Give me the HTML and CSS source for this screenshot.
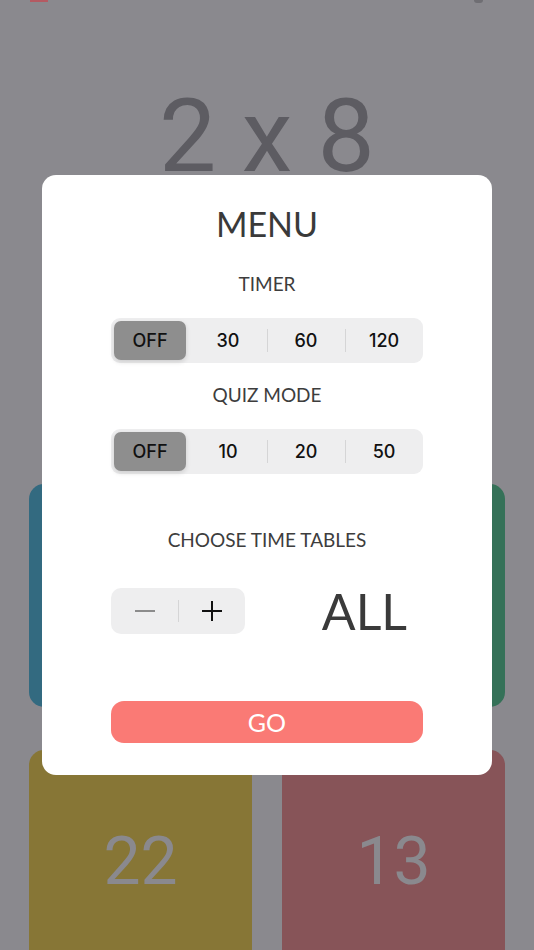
FILE: index.html
```html
<!DOCTYPE html>
<html>
<head>
<meta charset="utf-8">
<link rel="stylesheet" href="styles.css">
</head>
<body>
<div class="app">
  <div class="statusbar">
    <span class="sb-red"></span>
    <span class="sb-dot"></span>
  </div>
  <div class="question">2 x 8</div>
  <div class="tiles">
    <div class="tile blue"></div>
    <div class="tile green"></div>
    <div class="tile olive"><span>22</span></div>
    <div class="tile red"><span>13</span></div>
  </div>
</div>

<div class="overlay">
  <div class="modal">
    <div class="title">MENU</div>
    <div class="label label-timer">TIMER</div>
    <div class="seg seg-timer">
      <div class="opt on">OFF</div>
      <div class="opt">30</div>
      <div class="opt div">60</div>
      <div class="opt div">120</div>
    </div>
    <div class="label label-quiz">QUIZ MODE</div>
    <div class="seg seg-quiz">
      <div class="opt on">OFF</div>
      <div class="opt">10</div>
      <div class="opt div">20</div>
      <div class="opt div">50</div>
    </div>
    <div class="label label-tables">CHOOSE TIME TABLES</div>
    <div class="stepper-row">
      <div class="stepper">
        <div class="step minus">
          <svg width="22" height="22" viewBox="0 0 22 22"><line x1="1" y1="11" x2="21" y2="11" stroke="#8c8c8c" stroke-width="2"/></svg>
        </div>
        <div class="step plus">
          <svg width="22" height="22" viewBox="0 0 22 22"><line x1="1" y1="11" x2="21" y2="11" stroke="#111" stroke-width="2"/><line x1="11" y1="1" x2="11" y2="21" stroke="#111" stroke-width="2"/></svg>
        </div>
      </div>
      <div class="all">ALL</div>
    </div>
    <div class="go">GO</div>
  </div>
</div>
</body>
</html>
```

FILE: styles.css
```css
html, body {
  margin: 0;
  padding: 0;
}

body {
  width: 534px;
  height: 950px;
  overflow: hidden;
  background: #8a898e;
  font-family: "Lato", "Liberation Sans", sans-serif;
}

.app {
  display: flex;
  flex-direction: column;
  height: 950px;
}

.statusbar {
  height: 4px;
  display: flex;
  justify-content: space-between;
  align-items: flex-start;
  padding: 0 51px 0 30px;
}

.sb-red {
  width: 18px;
  height: 2px;
  background: #b45a62;
}

.sb-dot {
  width: 9px;
  height: 3px;
  border-radius: 0 0 5px 5px;
  background: #6f6e73;
}

.question {
  margin-top: 82px;
  height: 102px;
  line-height: 102px;
  text-align: center;
  font-family: "Roboto", "Liberation Sans", sans-serif;
  font-size: 102px;
  color: #5d5c62;
}

.tiles {
  margin-top: 297px;
  display: grid;
  grid-template-columns: 223px 223px;
  grid-auto-rows: 223px;
  column-gap: 30px;
  row-gap: 43px;
  padding-left: 29px;
}

.tile {
  border-radius: 15px;
  display: flex;
  align-items: center;
  justify-content: center;
  font-family: "Roboto", "Liberation Sans", sans-serif;
  font-size: 66px;
  color: #8a898e;
}

.blue { background: #336a80; }
.green { background: #357158; }
.olive { background: #877636; }
.red { background: #875458; }

.overlay {
  position: fixed;
  inset: 0;
  display: flex;
  align-items: center;
  justify-content: center;
}

.modal {
  width: 450px;
  height: 600px;
  background: #ffffff;
  border-radius: 14px;
  display: flex;
  flex-direction: column;
  align-items: center;
  box-sizing: border-box;
}

.title {
  margin-top: 31px;
  height: 36px;
  line-height: 36px;
  font-size: 34px;
  color: #3a3a3a;
}

.label {
  height: 22px;
  line-height: 22px;
  font-size: 19px;
  color: #3d3d3d;
}

.label-timer { margin-top: 31px; }
.label-quiz { margin-top: 21px; }
.label-tables { margin-top: 55px; }

.seg {
  margin-top: 23px;
  width: 312px;
  height: 45px;
  background: #eeeeef;
  border-radius: 9px;
  display: grid;
  grid-template-columns: repeat(4, 78px);
}

.opt {
  position: relative;
  display: flex;
  align-items: center;
  justify-content: center;
  font-family: "Inter", "Roboto", sans-serif;
  font-size: 18px;
  font-weight: 500;
  color: #111111;
}

.opt.div::before {
  content: "";
  position: absolute;
  left: 0;
  top: 11px;
  bottom: 11px;
  width: 1px;
  background: #d5d5d6;
}

.opt.on {
  margin: 3px;
  background: #8e8e8e;
  border-radius: 7px;
  box-shadow: 0 2px 5px rgba(0, 0, 0, 0.14);
}

.stepper-row {
  margin-top: 37px;
  width: 312px;
  height: 46px;
  display: flex;
  align-items: center;
  justify-content: space-between;
}

.stepper {
  width: 134px;
  height: 46px;
  background: #eeeeef;
  border-radius: 10px;
  display: grid;
  grid-template-columns: 67px 67px;
}

.step {
  position: relative;
  display: flex;
  align-items: center;
  justify-content: center;
}

.step.plus::before {
  content: "";
  position: absolute;
  left: 0;
  top: 12px;
  bottom: 12px;
  width: 1px;
  background: #d5d5d6;
}

.step svg {
  display: block;
}

.all {
  margin-right: 16px;
  font-size: 50px;
  line-height: 1;
  color: #3a3a3a;
}

.go {
  margin-top: 67px;
  width: 312px;
  height: 42px;
  line-height: 42px;
  border-radius: 13px;
  background: #fa7a75;
  color: #ffffff;
  text-align: center;
  font-size: 25px;
}
```
